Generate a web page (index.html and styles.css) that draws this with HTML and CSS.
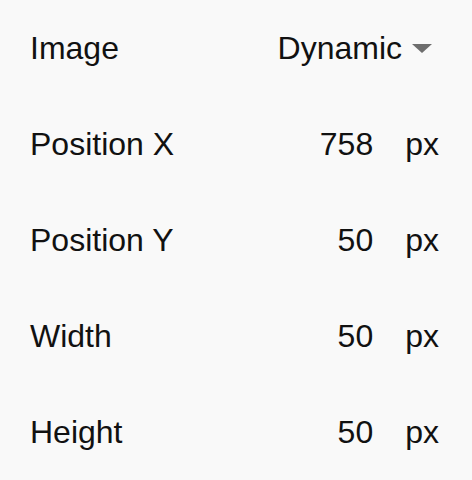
FILE: index.html
```html
<!DOCTYPE html>
<html lang="en">
<head>
    <meta charset="UTF-8">
    <meta name="viewport" content="width=device-width, initial-scale=1.0">
    <title>Image Properties</title>
    <link rel="stylesheet" href="styles.css">
</head>
<body>
    <div class="panel">
        <div class="row">
            <span class="label">Image</span>
            <span class="select">Dynamic <span class="caret"></span></span>
        </div>
        <div class="row">
            <span class="label">Position X</span>
            <span class="field"><span class="value">758</span><span class="unit">px</span></span>
        </div>
        <div class="row">
            <span class="label">Position Y</span>
            <span class="field"><span class="value">50</span><span class="unit">px</span></span>
        </div>
        <div class="row">
            <span class="label">Width</span>
            <span class="field"><span class="value">50</span><span class="unit">px</span></span>
        </div>
        <div class="row">
            <span class="label">Height</span>
            <span class="field"><span class="value">50</span><span class="unit">px</span></span>
        </div>
    </div>
</body>
</html>
```

FILE: styles.css
```css
html, body { margin: 0; background: #f9f9f9; }
body { font-family: "Liberation Sans", Arial, sans-serif; color: #111; }
.panel { width: 472px; }
.row { display: flex; align-items: center; justify-content: space-between; height: 96px; padding: 1px 33px 0 30px; box-sizing: border-box; font-size: 32px; }
.select { display: flex; align-items: center; margin-right: 7px; }
.caret { width: 0; height: 0; margin-left: 10px; border-left: 10px solid transparent; border-right: 10px solid transparent; border-top: 9px solid #6e6e6e; }
.field { display: flex; align-items: baseline; }
.value { text-align: right; }
.unit { margin-left: 32px; }
```
